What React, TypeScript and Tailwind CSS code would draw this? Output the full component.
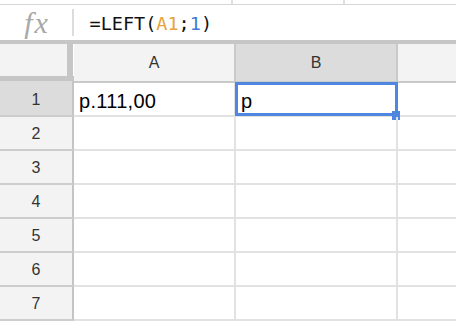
const ROWS = [1, 2, 3, 4, 5, 6, 7]

function RowHeader({ n }: { n: number }) {
  return (
    <div
      className={`flex h-[34px] items-center justify-center border-r-2 border-b-2 border-r-[#c4c4c4] border-b-[#cdcdcd] pt-[1px] text-[16px] text-[#333] ${
        n === 1 ? 'bg-[#dcdcdc]' : 'bg-[#f3f3f3]'
      }`}
    >
      {n}
    </div>
  )
}

function Cell({ children, selected }: { children?: string; selected?: boolean }) {
  return (
    <div className="relative flex h-[34px] items-center border-r-2 border-b-2 border-[#e2e2e2] pl-[5px] pt-[3px] text-[20px] tracking-[0.3px] text-black">
      {children}
      {selected && (
        <>
          <div className="pointer-events-none absolute -top-[1px] -left-[1px] -right-[2px] -bottom-[1px] border-[3px] border-[#4f86e0]" />
          <div className="absolute -right-[4px] -bottom-[5px] h-[9px] w-[8px] bg-[#4f86e0]" />
        </>
      )}
    </div>
  )
}

export default function App() {
  return (
    <div
      className="h-[322px] w-[456px] overflow-hidden bg-white"
      style={{ fontFamily: '"Liberation Sans", Arial, sans-serif' }}
    >
      {/* toolbar remnant */}
      <div className="flex h-[5px] border-b border-[#d6d6d6]">
        <div className="w-[233px] border-r-2 border-[#e0e0e0]" />
        <div className="w-[112px] border-r-2 border-[#e0e0e0]" />
      </div>

      {/* formula bar */}
      <div className="flex h-[35px] items-center">
        <div className="flex w-[72px] justify-center pl-[2px] pt-[1px]">
          <span className="font-['Liberation_Serif',serif] text-[30px] italic leading-none tracking-[2px] text-[#a8a8a8]">
            fx
          </span>
        </div>
        <div className="h-[27px] w-[1.5px] bg-[#dcdcdc]" />
        <div className="pl-[16px] pt-[3px] font-['DejaVu_Sans_Mono',monospace] text-[18.5px] text-[#111]">
          =LEFT(<span className="text-[#e9a23b]">A1</span>;<span className="text-[#3d7bd8]">1</span>)
        </div>
      </div>

      {/* header */}
      <div className="h-[4px] bg-[#c6c6c6]" />
      <div className="grid h-[39px] grid-cols-[74px_162px_162px_1fr]">
        <div className="flex flex-col">
          <div className="mr-[1px] h-[32px] border-r-[6px] border-[#c6c6c6] bg-[#f3f3f3]" />
          <div className="h-[5px] bg-[#c6c6c6]" />
          <div className="h-[2px] border-r-2 border-[#c4c4c4] bg-[#dcdcdc]" />
        </div>
        <div className="flex items-center justify-center border-r-2 border-b-2 border-[#c9c9c9] bg-[#f3f3f3] pt-[1px] text-[16px] text-[#333]">
          A
        </div>
        <div className="flex items-center justify-center border-r-2 border-b-2 border-[#c9c9c9] bg-[#dcdcdc] pt-[1px] text-[16px] text-[#333]">
          B
        </div>
        <div className="border-b-2 border-[#c9c9c9] bg-[#f3f3f3]" />
      </div>

      {/* rows */}
      <div className="grid grid-cols-[74px_162px_162px_1fr]">
        {ROWS.map((n) => (
          <div key={n} className="contents">
            <RowHeader n={n} />
            <Cell>{n === 1 ? 'p.111,00' : undefined}</Cell>
            <Cell selected={n === 1}>{n === 1 ? 'p' : undefined}</Cell>
            <div className="h-[34px] border-b-2 border-[#e2e2e2]" />
          </div>
        ))}
      </div>
    </div>
  )
}
